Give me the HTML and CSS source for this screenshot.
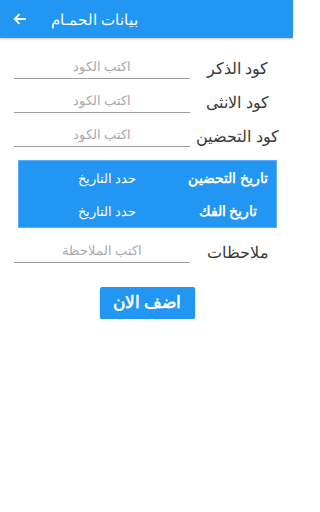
FILE: index.html
```html
<!DOCTYPE html>
<html lang="ar">
<head>
<meta charset="utf-8">
<link rel="stylesheet" href="styles.css">
</head>
<body>
<header class="appbar">
  <svg class="back" width="14" height="12" viewBox="0 0 14 12"><path d="M13 6H2M6.5 1.2L1.7 6l4.8 4.8" fill="none" stroke="#fff" stroke-width="1.8"/></svg>
  <span class="title" dir="rtl">بيانات الحمـام</span>
</header>
<main class="form" dir="rtl">
  <div class="row">
    <label class="label">كود الذكر</label>
    <input class="field" placeholder="اكتب الكود">
  </div>
  <div class="row">
    <label class="label">كود الانثى</label>
    <input class="field" placeholder="اكتب الكود">
  </div>
  <div class="row">
    <label class="label">كود التحضين</label>
    <input class="field" placeholder="اكتب الكود">
  </div>
  <section class="dates">
    <div class="drow"><span class="dlabel">تاريخ التحضين</span><span class="dval">حدد التاريخ</span></div>
    <div class="drow"><span class="dlabel">تاريخ الفك</span><span class="dval">حدد التاريخ</span></div>
  </section>
  <div class="row notes">
    <label class="label">ملاحظات</label>
    <input class="field" placeholder="اكتب الملاحظة">
  </div>
  <div class="actions"><button class="btn">اضف الان</button></div>
</main>
</body>
</html>
```
FILE: styles.css
```css
html, body { margin: 0; padding: 0; background: #fff; }
body { font-family: "Noto Sans", sans-serif; width: 293px; }
.appbar {
  height: 38px; background: #2196f3; display: flex; align-items: center;
  box-shadow: 0 1px 2px rgba(0,0,0,0.25); position: relative;
}
.back { margin-left: 13px; }
.title { margin-left: 24px; color: #fff; font-size: 15px; }
.form { padding-top: 7px; }
.row { display: flex; align-items: flex-end; padding: 12px 8px 0 14px; }
.label {
  width: 95px; text-align: center; font-size: 16px; color: #3a3a3a;
  line-height: 22px; height: 22px; white-space: nowrap;
}
.field {
  width: 176px; box-sizing: border-box; height: 22px; border: 0;
  border-bottom: 1px solid #9e9e9e; padding: 0 0 3px; margin: 0;
  font-family: inherit; font-size: 13px; text-align: center; background: transparent; outline: none;
}
.field::placeholder { color: #aaa; }
.dates {
  margin: 13px 16px 0 18px; background: #2196f3; border: 1px solid #5aaef5; box-sizing: border-box; height: 68px;
  display: flex; flex-direction: column;
}
.drow { flex: 1; display: flex; align-items: center; color: #fff; }
.dlabel { width: 96px; text-align: center; font-weight: bold; font-size: 14px; white-space: nowrap; }
.dval { width: 146px; text-align: center; font-size: 13px; }
.notes { padding-top: 13px; }
.actions { display: flex; justify-content: center; padding-top: 24px; }
.btn {
  width: 95px; height: 32px; border: 0; border-radius: 2px; background: #2196f3; color: #fff;
  font-family: inherit; font-weight: bold; font-size: 17px; box-shadow: 0 1px 2px rgba(0,0,0,0.3); margin-left: 1px; padding: 0 0 3px;
}
```
